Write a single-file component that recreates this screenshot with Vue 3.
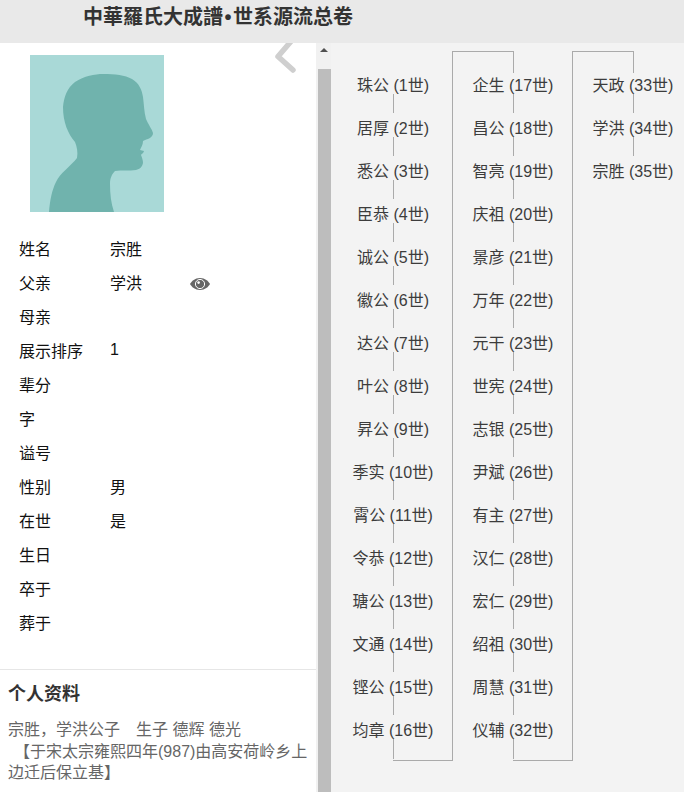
<script setup>
const rows = [
  ['姓名', '宗胜'], ['父亲', '学洪', true], ['母亲', ''], ['展示排序', '1'], ['辈分', ''], ['字', ''],
  ['谥号', ''], ['性别', '男'], ['在世', '是'], ['生日', ''], ['卒于', ''], ['葬于', '']
]
const names = ['珠公','居厚','悉公','臣恭','诚公','徽公','达公','叶公','昇公','季实','霄公','令恭','瑭公','文通','铿公','均章','企生','昌公','智亮','庆祖','景彦','万年','元干','世宪','志银','尹斌','有主','汉仁','宏仁','绍祖','周慧','仪辅','天政','学洪','宗胜']
const people = names.map((n, i) => `${n} (${i + 1}世)`)
const columns = [people.slice(0, 16), people.slice(16, 32), people.slice(32)]
</script>

<template>
  <div class="page">
    <header class="top"><h1>中華羅氏大成譜<span class="dot">•</span>世系源流总卷</h1></header>
    <div class="main">
      <aside class="side">
        <svg class="back" width="24" height="30" viewBox="0 0 24 30"><path d="M18 -4 L3 13.5 L18 27" fill="none" stroke="#cfcfcf" stroke-width="5.5" stroke-linecap="round" stroke-linejoin="round"/></svg>
        <svg class="avatar" width="134" height="157" viewBox="30 55 134 157">
          <rect x="30" y="55" width="134" height="157" fill="#a9d9d7"/>
          <path fill="#70b3ad" d="M49 212 C50 200 52 190 56 182 C60 173 71 166 77 158 C78 152 77 147 75 142 C68 134 63 122 63 107 C64 97 67 88 75 82 C84 76 95 74 103 74 C115 74 125 75 132 79 C139 83 142 90 143 97 C144 104 144 112 146 119 C148 124 152 129 153 133 C153 138 147 139 143 141 C143 145 141 147 140 150 L144 151 C144 153 141 154 141 155 C142 158 143 160 143 163 C142 167 140 169 136 170 C129 171 122 170 115 171 C112 174 110 178 110 184 C110 194 111 203 114 212 Z"/>
        </svg>
        <div class="info">
          <div v-for="r in rows" :key="r[0]" class="row">
            <span class="label">{{ r[0] }}</span>
            <span class="value">{{ r[1] }}</span>
            <svg v-if="r[2]" class="eye" width="20" height="14" viewBox="0 0 20 14">
              <path fill="#666" d="M10 1 C15 1 18.5 4.2 20 7 C18.5 9.8 15 13 10 13 C5 13 1.5 9.8 0 7 C1.5 4.2 5 1 10 1 Z"/>
              <circle cx="10" cy="7" r="4.6" fill="none" stroke="#fff" stroke-width="1"/>
              <circle cx="8.6" cy="5.6" r="1.3" fill="#fff"/>
            </svg>
          </div>
        </div>
        <section class="bio">
          <h2>个人资料</h2>
          <p>宗胜，学洪公子　生子 德辉 德光<br><span class="indent">【于宋太宗雍熙四年(987)由高安荷岭乡上</span><br>边迁后保立基】</p>
        </section>
      </aside>
      <div class="scrollbar">
        <div class="up"><i></i></div>
        <div class="thumb"></div>
      </div>
      <div class="tree">
        <div v-for="(col, c) in columns" :key="c" class="col" :class="{ linked: c > 0, open: c < 2 }">
          <template v-for="(p, i) in col" :key="p">
            <div v-if="i > 0 || c > 0" class="stem" :class="{ first: i === 0 }"></div>
            <div class="person">{{ p }}</div>
          </template>
          <div v-if="c < 2" class="stem tail"></div>
        </div>
      </div>
    </div>
  </div>
</template>

<style>
html, body { margin: 0; padding: 0; overflow: hidden; }
</style>

<style scoped>
.page {
  width: 684px;
  height: 792px;
  overflow: hidden;
  display: flex;
  flex-direction: column;
  background: #fff;
  font-family: "Liberation Sans", "Noto Sans CJK SC", sans-serif;
}
.top {
  height: 43px;
  flex: none;
  background: #e9e9e9;
  padding-left: 83px;
  box-sizing: border-box;
  position: relative;
  z-index: 2;
}
h1 {
  margin: 0;
  font-size: 20px;
  font-weight: 700;
  line-height: 35px;
  color: #333;
}
.dot { padding: 0 1.5px; }
.main { flex: 1; display: flex; min-height: 0; }
.side {
  width: 316px;
  flex: none;
  position: relative;
  display: flex;
  flex-direction: column;
  background: #fff;
}
.back { position: absolute; left: 275px; top: 0; overflow: visible; }
.avatar { display: block; flex: none; margin: 12px 0 0 30px; }
.info { flex: none; margin-top: 18px; padding-left: 19px; }
.row {
  height: 34px;
  box-sizing: border-box;
  padding-top: 2px;
  display: flex;
  align-items: center;
  font-size: 16px;
  color: #111;
}
.label { width: 91px; }
.value { width: 80px; }
.eye { display: block; margin-top: 3px; }
.bio {
  flex: none;
  margin-top: 31px;
  border-top: 1px solid #e6e6e6;
  padding: 11px 8px 0;
}
h2 {
  margin: 0;
  font-size: 18px;
  font-weight: 700;
  line-height: 26px;
  color: #333;
}
.bio p {
  margin: 12px 0 0;
  font-size: 16px;
  line-height: 21.5px;
  color: #666;
  white-space: nowrap;
}
.indent { padding-left: 6px; }
.scrollbar { width: 15px; flex: none; background: #f1f1f1; display: flex; flex-direction: column; }
.up { height: 26px; display: flex; justify-content: center; padding-top: 5px; box-sizing: border-box; }
.up i { width: 0; height: 0; border-left: 4px solid transparent; border-right: 4px solid transparent; border-bottom: 4px solid #505050; }
.thumb { flex: 1; margin-left: 2px; background: #bdbdbd; }
.tree {
  flex: 1;
  min-width: 0;
  overflow: hidden;
  background: #f3f3f3;
  display: flex;
  align-items: flex-start;
  padding: 8px 0 0 2px;
}
.col {
  width: 120px;
  flex: none;
  height: 710px;
  box-sizing: border-box;
  display: flex;
  flex-direction: column;
  align-items: center;
  position: relative;
  white-space: nowrap;
}
.linked::before {
  content: "";
  position: absolute;
  left: -1px;
  top: 0;
  bottom: 0;
  width: 61px;
  box-sizing: border-box;
  border-left: 1px solid #aaa;
  border-top: 1px solid #aaa;
}
.open::after {
  content: "";
  position: absolute;
  left: 60px;
  right: 1px;
  bottom: 0;
  height: 1px;
  background: #aaa;
}
.stem { width: 1px; height: 19px; flex: none; background: #aaa; }
.stem.first { height: 22px; margin-bottom: -3px; }
.stem.tail { height: 20px; }
.person {
  height: 24px;
  flex: none;
  font-size: 16px;
  line-height: 31px;
  color: #3c3c3c;
}
.col:not(.linked) .person:first-child { margin-top: 19px; }
</style>
